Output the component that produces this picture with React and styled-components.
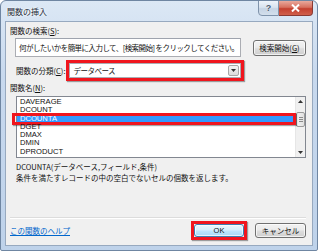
import React from "react";
import styled, { createGlobalStyle } from "styled-components";

const Global = createGlobalStyle`
  html, body { margin: 0; padding: 0; background: #ffffff; }
  body { font-family: "Noto Sans CJK JP", "Liberation Sans", sans-serif; }
  * { box-sizing: border-box; }
`;

const JP = `"Noto Sans CJK JP", sans-serif`;
const LAT = `"Liberation Sans", "Noto Sans CJK JP", sans-serif`;

const Window = styled.div`
  width: 318px;
  height: 251px;
  border: 1px solid #6f86a2;
  border-radius: 6px 6px 2px 2px;
  background: linear-gradient(180deg, #dce8f5 0%, #c8d9ee 30%, #bed2ea 100%);
  display: flex;
  flex-direction: column;
  overflow: hidden;
`;

const TitleBar = styled.div`
  height: 20px;
  display: flex;
  align-items: flex-start;
  padding-left: 6px;
`;

const Title = styled.div`
  font-family: ${JP};
  font-size: 8px;
  line-height: 8px;
  margin-top: 7px;
  color: #1e2a38;
  text-shadow: 0 0 3px #ffffff, 0 0 2px #ffffff;
  flex: 1;
`;

const CaptionButtons = styled.div`
  display: flex;
  margin-right: 4px;
  margin-top: -1px;
`;

const CapBtn = styled.div`
  height: 16px;
  width: ${(p) => p.w}px;
  display: flex;
  align-items: center;
  justify-content: center;
  border: 1px solid ${(p) => (p.close ? "#8a3a33" : "#7f93ab")};
  border-left: ${(p) => (p.close ? "none" : "1px solid #7f93ab")};
  border-radius: ${(p) => (p.close ? "0 0 4px 0" : "0 0 0 4px")};
  background: ${(p) =>
    p.close
      ? "linear-gradient(180deg, #e9a99c 0%, #d7705f 45%, #c4402f 55%, #d0604c 100%)"
      : "linear-gradient(180deg, #eef3fa 0%, #d9e3ef 45%, #c5d3e4 55%, #d3dfec 100%)"};
  color: ${(p) => (p.close ? "#ffffff" : "#4a5a6e")};
  font-family: ${LAT};
  font-size: ${(p) => (p.close ? 9 : 9)}px;
  font-weight: bold;
  text-shadow: ${(p) => (p.close ? "0 0 1px #6b1a12" : "0 0 1px #ffffff")};
`;

const Client = styled.div`
  flex: 1;
  margin: 0 4px 4px 4px;
  border: 1px solid #97a9bf;
  background: #f0f0f0;
  display: flex;
  flex-direction: column;
  padding: 0 6px 0 4px;
`;

const Label = styled.div`
  font-family: ${JP};
  font-size: 7.5px;
  line-height: 10px;
  height: 10px;
  color: #111;
  margin-top: ${(p) => p.mt || 0}px;
  margin-left: ${(p) => p.ml || 0}px;
  white-space: nowrap;
  u { text-decoration: underline; }
`;

const Row = styled.div`
  display: flex;
  align-items: center;
  margin-top: ${(p) => p.mt || 0}px;
`;

const TextBox = styled.div`
  margin-left: 5px;
  width: 226px;
  height: 19px;
  background: #fff;
  border: 1px solid #abadb3;
  border-top-color: #9ea3ad;
  font-family: ${JP};
  font-size: 7.5px;
  letter-spacing: -0.55px;
  line-height: 17px;
  padding-left: 3px;
  color: #111;
  white-space: nowrap;
  overflow: hidden;
`;

const Button = styled.div`
  width: ${(p) => p.w}px;
  height: ${(p) => p.h}px;
  margin-left: ${(p) => p.ml || 0}px;
  border: 1px solid ${(p) => (p.primary ? "#3c7fb1" : "#707070")};
  border-radius: 3px;
  background: ${(p) =>
    p.primary
      ? "linear-gradient(180deg, #eaf6fd 0%, #d9f0fc 45%, #bee6fd 55%, #a7d9f5 100%)"
      : "linear-gradient(180deg, #f2f2f2 0%, #ebebeb 45%, #dddddd 55%, #cfcfcf 100%)"};
  box-shadow: inset 0 0 0 1px rgba(255, 255, 255, 0.7);
  display: flex;
  align-items: center;
  justify-content: center;
  font-family: ${(p) => (p.latin ? LAT : JP)};
  font-size: 7.5px;
  color: #111;
  white-space: nowrap;
  u { text-decoration: underline; }
`;

const RedBox = styled.div`
  border: 3px solid #f0161e;
  box-shadow: 1px 1px 1px rgba(0, 0, 0, 0.35);
  margin-left: ${(p) => p.ml || 0}px;
  display: flex;
`;

const Select = styled.div`
  width: 172px;
  height: 15px;
  background: #fff;
  border: 1px solid #abadb3;
  display: flex;
  align-items: center;
  padding-left: 3px;
  font-family: ${JP};
  font-size: 7.5px;
  letter-spacing: -0.5px;
  color: #111;
`;

const SelectText = styled.div`
  flex: 1;
`;

const DropBtn = styled.div`
  width: 11px;
  height: 11px;
  margin-right: 1px;
  border: 1px solid #a7a7a7;
  border-radius: 2px;
  background: linear-gradient(180deg, #f4f4f4 0%, #dcdcdc 100%);
  display: flex;
  align-items: center;
  justify-content: center;
`;

const ListBox = styled.div`
  margin-left: 6px;
  width: 290px;
  height: 62px;
  background: #fff;
  border: 1px solid #828790;
  display: flex;
`;

const Items = styled.div`
  flex: 1;
  padding-top: 1px;
`;

const Item = styled.div`
  position: relative;
  height: 8.3px;
  line-height: 8.3px;
  padding-left: 3px;
  font-family: ${LAT};
  font-size: 7.6px;
  color: ${(p) => (p.selected ? "#fff" : "#111")};
  background: ${(p) => (p.selected ? "#3399ff" : "transparent")};
  ${(p) =>
    p.selected &&
    `
    &::after {
      content: "";
      position: absolute;
      left: -5px;
      right: -1px;
      top: -2px;
      bottom: -2px;
      border: 3px solid #f0161e;
      box-shadow: 1px 1px 1px rgba(0,0,0,0.35);
    }
  `}
`;

const ScrollBar = styled.div`
  width: 10px;
  background: #f0f0f0;
  border-left: 1px solid #e6e6e6;
  display: flex;
  flex-direction: column;
  align-items: center;
`;

const Arrow = styled.div`
  height: 9px;
  display: flex;
  align-items: center;
  justify-content: center;
`;

const Thumb = styled.div`
  width: 9px;
  height: 15px;
  margin-top: 6px;
  border: 1px solid #9a9a9a;
  border-radius: 2px;
  background: linear-gradient(90deg, #f3f3f3 0%, #e0e0e0 100%);
  display: flex;
  flex-direction: column;
  align-items: center;
  justify-content: center;
  gap: 1px;
`;

const Grip = styled.div`
  width: 4px;
  height: 1px;
  background: #8a8a8a;
`;

const Spacer = styled.div`
  flex: 1;
`;

const Desc = styled.div`
  margin-top: 3px;
  margin-left: 6px;
  font-family: ${JP};
  font-size: 7.5px;
  line-height: 11px;
  color: #111;
  white-space: nowrap;
`;

const Separator = styled.div`
  height: 2px;
  margin-left: 0px;
  border-top: 1px solid #dcdcdc;
  border-bottom: 1px solid #ffffff;
`;

const Footer = styled.div`
  height: 23px;
  display: flex;
  align-items: center;
  margin-bottom: 3px;
`;

const Link = styled.div`
  font-family: ${JP};
  font-size: 7.5px;
  color: #0066cc;
  text-decoration: underline;
  flex: 1;
`;

const Tri = ({ up }) => (
  <svg width="5" height="3" viewBox="0 0 5 3">
    <path d={up ? "M0 3 L2.5 0 L5 3 Z" : "M0 0 L5 0 L2.5 3 Z"} fill="#333" />
  </svg>
);

const items = ["DAVERAGE", "DCOUNT", "DCOUNTA", "DGET", "DMAX", "DMIN", "DPRODUCT"];

export default function App() {
  return (
    <>
      <Global />
      <Window>
        <TitleBar>
          <Title>関数の挿入</Title>
          <CaptionButtons>
            <CapBtn w={21}>?</CapBtn>
            <CapBtn w={34} close>
              <svg width="9" height="8" viewBox="0 0 9 8">
                <path d="M1 0.5 L8 7.5 M8 0.5 L1 7.5" stroke="#fff" strokeWidth="2" />
              </svg>
            </CapBtn>
          </CaptionButtons>
        </TitleBar>
        <Client>
          <Label mt={4}>
            関数の検索(<u>S</u>):
          </Label>
          <Row mt={2}>
            <TextBox>何がしたいかを簡単に入力して、[検索開始] をクリックしてください。</TextBox>
            <Button w={53} h={16} ml={12}>
              検索開始(<u>G</u>)
            </Button>
          </Row>
          <Row mt={3}>
            <Label ml={6}>
              関数の分類(<u>C</u>):
            </Label>
            <RedBox ml={1}>
              <Select>
                <SelectText>データベース</SelectText>
                <DropBtn>
                  <Tri />
                </DropBtn>
              </Select>
            </RedBox>
          </Row>
          <Label mt={2}>
            関数名(<u>N</u>):
          </Label>
          <ListBox style={{ marginTop: 3 }}>
            <Items>
              {items.map((t) => (
                <Item key={t} selected={t === "DCOUNTA"}>
                  {t}
                </Item>
              ))}
            </Items>
            <ScrollBar>
              <Arrow>
                <Tri up />
              </Arrow>
              <Thumb>
                <Grip />
                <Grip />
                <Grip />
              </Thumb>
              <Spacer />
              <Arrow>
                <Tri />
              </Arrow>
            </ScrollBar>
          </ListBox>
          <Desc>
            DCOUNTA(データベース,フィールド,条件)
            <br />
            条件を満たすレコードの中の空白でないセルの個数を返します。
          </Desc>
          <Spacer />
          <Separator />
          <Footer>
            <Link>この関数のヘルプ</Link>
            <RedBox>
              <Button w={50} h={13} primary latin>
                OK
              </Button>
            </RedBox>
            <Button w={51} h={15} ml={8}>
              キャンセル
            </Button>
          </Footer>
        </Client>
      </Window>
    </>
  );
}
